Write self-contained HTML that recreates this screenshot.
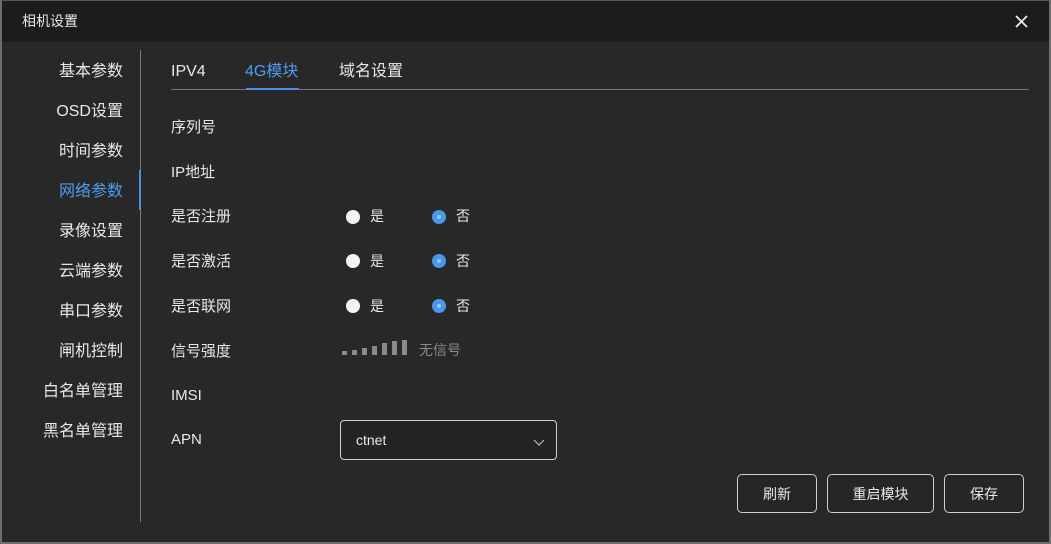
<!DOCTYPE html>
<html><head><meta charset="utf-8"><style>
*{margin:0;padding:0;box-sizing:border-box}
body{width:1051px;height:544px;background:#282828;font-family:"Liberation Sans","Noto Sans CJK SC",sans-serif;color:#e8e8e8;position:relative;overflow:hidden}
.frame{position:absolute;left:0;top:0;width:1051px;height:544px;border:2px solid #6e6e6e;border-top:1px solid #555}
.hdr{position:absolute;left:2px;top:1px;right:2px;height:41px;background:#1c1c1c}
.t{position:absolute;white-space:nowrap}
.side{font-size:16px;right:928px;text-align:right}
.lbl{font-size:15px;left:171px}
.radio{position:absolute;width:14px;height:14px;border-radius:50%;background:#f4f4f4}
.radio.on{background:#4a97ef}
.radio.on::after{content:"";position:absolute;left:5px;top:5px;width:4px;height:4px;border-radius:50%;background:#9cc8f7}
.rt{font-size:14px}
.btn{position:absolute;top:474px;height:39px;border:1px solid #cfcfcf;border-radius:5px;font-size:14px;display:flex;align-items:center;justify-content:center;background:#262626}
.bar{position:absolute;width:5px;background:#8a8a8a}
</style></head><body>
<div class="hdr"></div>
<div class="frame"></div>
<div class="t" style="left:22px;top:11px;font-size:14px">相机设置</div>
<svg style="position:absolute;left:1015px;top:15px" width="13" height="13"><path d="M1 1L12 12M12 1L1 12" stroke="#eee" stroke-width="1.8"/></svg>

<div style="position:absolute;left:140px;top:50px;width:1px;height:472px;background:#7a7a7a"></div>
<div style="position:absolute;left:139px;top:170px;width:2px;height:40px;background:#4a90e2"></div>
<div class="t side" style="top:57px">基本参数</div>
<div class="t side" style="top:97px">OSD设置</div>
<div class="t side" style="top:137px">时间参数</div>
<div class="t side" style="top:177px;color:#4d9cf0">网络参数</div>
<div class="t side" style="top:217px">录像设置</div>
<div class="t side" style="top:257px">云端参数</div>
<div class="t side" style="top:297px">串口参数</div>
<div class="t side" style="top:337px">闸机控制</div>
<div class="t side" style="top:377px">白名单管理</div>
<div class="t side" style="top:417px">黑名单管理</div>

<div class="t" style="left:171px;top:63px;font-size:16px">IPV4</div>
<div class="t" style="left:245px;top:57px;font-size:16px;color:#4d9cf0">4G模块</div>
<div class="t" style="left:339px;top:57px;font-size:16px">域名设置</div>
<div style="position:absolute;left:171px;top:89px;width:858px;height:1px;background:#777"></div>
<div style="position:absolute;left:246px;top:88px;width:53px;height:2px;background:#4a90e2"></div>

<div class="t lbl" style="top:116px">序列号</div>
<div class="t lbl" style="top:161px">IP地址</div>
<div class="t lbl" style="top:205px">是否注册</div>
<div class="t lbl" style="top:250px">是否激活</div>
<div class="t lbl" style="top:295px">是否联网</div>
<div class="t lbl" style="top:340px">信号强度</div>
<div class="t lbl" style="top:387px">IMSI</div>
<div class="t lbl" style="top:431px">APN</div>

<div class="radio" style="left:346px;top:210px"></div><div class="t rt" style="left:370px;top:206px">是</div>
<div class="radio on" style="left:432px;top:210px"></div><div class="t rt" style="left:456px;top:206px">否</div>
<div class="radio" style="left:346px;top:254px"></div><div class="t rt" style="left:370px;top:251px">是</div>
<div class="radio on" style="left:432px;top:254px"></div><div class="t rt" style="left:456px;top:251px">否</div>
<div class="radio" style="left:346px;top:299px"></div><div class="t rt" style="left:370px;top:296px">是</div>
<div class="radio on" style="left:432px;top:299px"></div><div class="t rt" style="left:456px;top:296px">否</div>

<div class="bar" style="left:342px;top:351px;height:4px"></div>
<div class="bar" style="left:352px;top:350px;height:5px"></div>
<div class="bar" style="left:362px;top:348px;height:7px"></div>
<div class="bar" style="left:372px;top:346px;height:9px"></div>
<div class="bar" style="left:382px;top:343px;height:12px"></div>
<div class="bar" style="left:392px;top:341px;height:14px"></div>
<div class="bar" style="left:402px;top:340px;height:15px"></div>
<div class="t" style="left:419px;top:340px;font-size:14px;color:#8a8a8a">无信号</div>

<div style="position:absolute;left:340px;top:420px;width:217px;height:40px;border:1px solid #cfcfcf;border-radius:4px;background:#242424"></div>
<div class="t" style="left:356px;top:432px;font-size:14px">ctnet</div>
<svg style="position:absolute;left:533px;top:439px" width="12" height="8"><path d="M1 1L6 6L11 1" stroke="#bbb" stroke-width="1.2" fill="none"/></svg>

<div class="btn" style="left:737px;width:80px">刷新</div>
<div class="btn" style="left:827px;width:107px">重启模块</div>
<div class="btn" style="left:944px;width:80px">保存</div>
</body></html>
